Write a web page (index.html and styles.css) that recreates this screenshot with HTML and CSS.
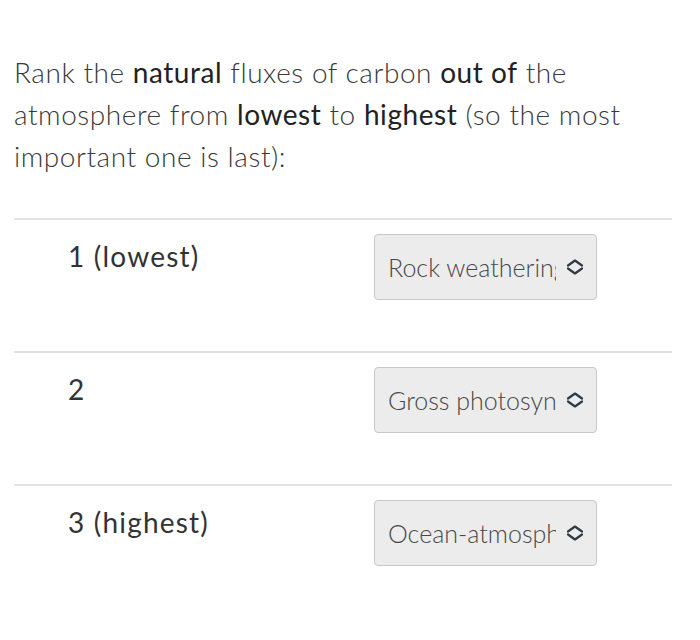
FILE: index.html
```html
<!DOCTYPE html>
<html lang="en">
<head>
    <meta charset="UTF-8">
    <meta name="viewport" content="width=device-width, initial-scale=1.0">
    <title>Rank the fluxes</title>
    <link rel="stylesheet" href="styles.css">
</head>
<body>
    <div class="quiz-question">
        <p class="question-text">
            Rank the <strong>natural</strong> fluxes of carbon <strong>out of</strong> the
            atmosphere from <strong>lowest</strong> to <strong>highest</strong> (so the most
            important one is last):
        </p>

        <div class="answer-rows">
            <div class="answer-row">
                <div class="answer-label">1 (lowest)</div>
                <div class="select-wrap">
                    <select class="answer-select">
                        <option>Rock weathering</option>
                        <option>Gross photosynthesis</option>
                        <option>Ocean-atmosphere exchange</option>
                    </select>
                    <svg class="select-arrows" width="18" height="16" viewBox="0 0 18 16">
                        <path d="M2 6.5 L9 1.5 L16 6.5 M2 9.5 L9 14.5 L16 9.5" fill="none" stroke="#2d3b45" stroke-width="2.2" stroke-linecap="round" stroke-linejoin="round"/>
                    </svg>
                </div>
            </div>
            <div class="answer-row">
                <div class="answer-label">2</div>
                <div class="select-wrap">
                    <select class="answer-select">
                        <option>Gross photosynthesis</option>
                        <option>Rock weathering</option>
                        <option>Ocean-atmosphere exchange</option>
                    </select>
                    <svg class="select-arrows" width="18" height="16" viewBox="0 0 18 16">
                        <path d="M2 6.5 L9 1.5 L16 6.5 M2 9.5 L9 14.5 L16 9.5" fill="none" stroke="#2d3b45" stroke-width="2.2" stroke-linecap="round" stroke-linejoin="round"/>
                    </svg>
                </div>
            </div>
            <div class="answer-row">
                <div class="answer-label">3 (highest)</div>
                <div class="select-wrap">
                    <select class="answer-select">
                        <option>Ocean-atmosphere exchange</option>
                        <option>Rock weathering</option>
                        <option>Gross photosynthesis</option>
                    </select>
                    <svg class="select-arrows" width="18" height="16" viewBox="0 0 18 16">
                        <path d="M2 6.5 L9 1.5 L16 6.5 M2 9.5 L9 14.5 L16 9.5" fill="none" stroke="#2d3b45" stroke-width="2.2" stroke-linecap="round" stroke-linejoin="round"/>
                    </svg>
                </div>
            </div>
        </div>
    </div>
</body>
</html>
```

FILE: styles.css
```css
body {
    margin: 0;
    background: #fff;
    font-family: 'Lato', 'Open Sans', sans-serif;
    color: #2d3b45;
}

.quiz-question {
    width: 658px;
    padding: 51px 0 0 14px;
}

.question-text {
    margin: 0;
    font-size: 28px;
    line-height: 42px;
    letter-spacing: 0.55px;
    font-weight: 300;
    color: #3a3a3a;
}

.question-text strong {
    font-weight: 400;
    color: #222;
}

.answer-rows {
    margin-top: 41px;
}

.answer-row {
    display: grid;
    grid-template-columns: 306px auto;
    align-items: start;
    height: 133px;
    box-sizing: border-box;
    padding: 14px 0 0 54px;
    border-top: 2px solid #e2e2e2;
}

.answer-label {
    font-size: 28px;
    line-height: 34px;
    letter-spacing: 1.2px;
    font-weight: 400;
    color: #333;
    margin-top: 5px;
}

.select-wrap {
    position: relative;
    width: 223px;
}

.answer-select {
    appearance: none;
    -webkit-appearance: none;
    width: 223px;
    height: 66px;
    margin: 0;
    padding: 0 40px 0 13px;
    font-family: 'Lato', 'Open Sans', sans-serif;
    font-size: 25px;
    font-weight: 300;
    color: #484848;
    background: #ececec;
    border: 1px solid #c9c9c9;
    border-radius: 4px;
    outline: none;
}

.select-arrows {
    position: absolute;
    left: 192px;
    top: 25px;
    pointer-events: none;
}
```
